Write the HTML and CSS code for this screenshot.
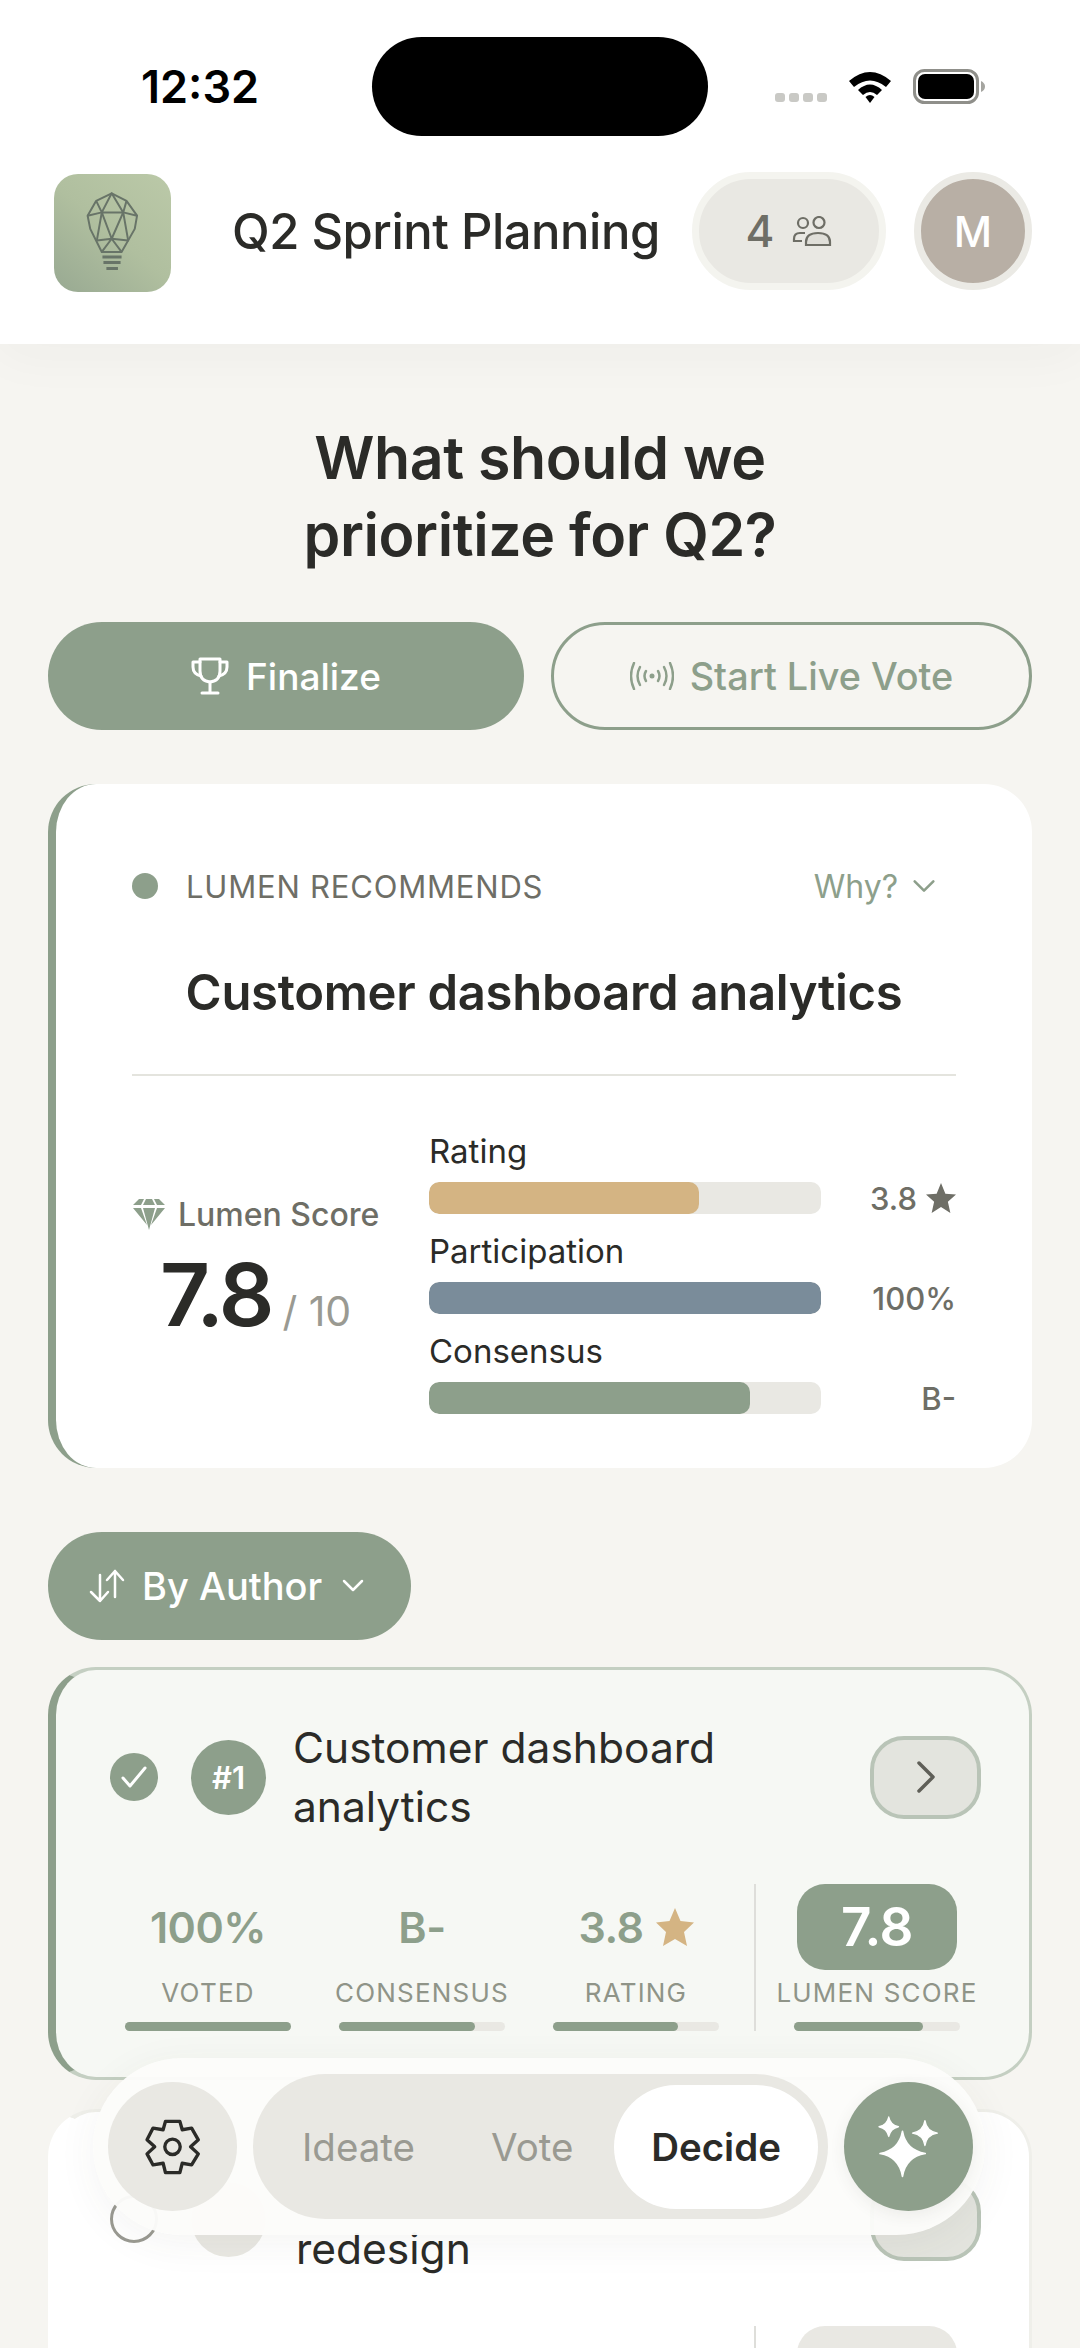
FILE: index.html
```html
<!DOCTYPE html>
<html lang="en">

<head>
    <meta charset="UTF-8">
    <title>Q2 Sprint Planning</title>
    <meta name="viewport" content="width=device-width, initial-scale=1.0">
    <link rel="stylesheet" href="styles.css">
</head>

<body>

    <header class="top">
        <div class="status-bar">
            <span class="time">12:32</span>
            <div class="island"></div>
            <div class="status-icons">
                <div class="signal"><i></i><i></i><i></i><i></i></div>
                <svg class="wifi" viewBox="0 0 44 33">
                    <path d="M1 11 Q22 -7 43 11 L38 17 Q22 4 6 17 Z" fill="#000" />
                    <path d="M10 20 Q22 9 34 20 L29 25 Q22 19 15 25 Z" fill="#000" />
                    <path d="M17.500 27 Q22 23 26.500 27 L22 33 Z" fill="#000" />
                </svg>
                <svg class="battery" viewBox="0 0 73 35">
                    <rect x="1.500" y="1.500" width="63" height="32" rx="10" fill="none" stroke="#8f8f8a" stroke-width="3" />
                    <rect x="5" y="5" width="56" height="25" rx="7" fill="#000" />
                    <path d="M68 12 Q72 14 72 17.500 Q72 21 68 23 Z" fill="#a5a5a0" />
                </svg>
            </div>
        </div>

        <div class="app-bar">
            <div class="logo">
                <svg viewBox="70 70 355 355">
                    <g fill="none" stroke="#687468" stroke-width="6" stroke-linejoin="round">
                        <path d="M245 127 L290 150 L322 195 L315 235 L275 305 H215 L180 235 L172 195 L198 150 Z" />
                        <path d="M215 185 H280 L245 127 Z M215 185 L245 265 L280 185 M198 150 L215 185 L172 195 M290 150 L280 185 L322 195" />
                        <path d="M215 185 L200 270 L245 265 L295 270 L280 185 M245 265 L215 305 M245 265 L275 305" />
                    </g>
                    <path d="M217 320 H275 M220 337 H272 M229 355 H264" stroke="#687468" stroke-width="9" />
                </svg>
            </div>
            <h1 class="app-title">Q2 Sprint Planning</h1>
            <div class="people-pill">
                <span>4</span>
                <svg viewBox="0 0 40 30" fill="none" stroke="#6e6e66" stroke-width="2.200">
                    <circle cx="11" cy="7" r="5" />
                    <circle cx="27" cy="6.500" r="5.500" />
                    <path d="M13 17 H8 Q2 17 2 23 V25 H10" />
                    <path d="M14 29 V26 Q14 17 26 17 Q38 17 38 26 V29 Z" fill="#e0dfd9" />
                </svg>
            </div>
            <div class="avatar">M</div>
        </div>
    </header>

    <main class="content">
        <h2 class="question">What should we<br>prioritize for Q2?</h2>

        <div class="actions">
            <button class="btn btn-finalize">
                <svg viewBox="0 0 38 38" fill="none" stroke="#fff" stroke-width="3" stroke-linejoin="round" stroke-linecap="round">
                    <path d="M9 2 H29 V14 Q29 24 19 25 Q9 24 9 14 Z" />
                    <path d="M9 5 H2 V10 Q2 17 10 19 M29 5 H36 V10 Q36 17 28 19 M19 25 V36 M11 36 H27" />
                </svg>
                Finalize
            </button>
            <button class="btn btn-live">
                <svg viewBox="0 0 44 28" fill="none" stroke="#8d9f8b" stroke-width="2.500" stroke-linecap="round">
                    <circle cx="22" cy="14" r="2.500" fill="#8d9f8b" stroke="none" />
                    <path d="M16 9 Q13 14 16 19 M28 9 Q31 14 28 19" />
                    <path d="M10 5 Q5 14 10 23 M34 5 Q39 14 34 23" />
                    <path d="M4 1 Q-2 14 4 27 M40 1 Q46 14 40 27" />
                </svg>
                Start Live Vote
            </button>
        </div>

        <section class="rec-card">
            <div class="rec-head">
                <span class="rec-dot"></span>
                <span class="rec-label">LUMEN RECOMMENDS</span>
                <span class="rec-why">Why?
                    <svg viewBox="0 0 20 12" fill="none" stroke="#8d9f8b" stroke-width="2.200" stroke-linecap="round" stroke-linejoin="round">
                        <path d="M2 2 L10 10 L18 2" />
                    </svg>
                </span>
            </div>
            <h3 class="rec-title">Customer dashboard analytics</h3>
            <div class="rec-line"></div>

            <div class="rec-body">
                <div class="score">
                    <div class="score-name">
                        <svg viewBox="0 0 34 32">
                            <path d="M7 1 H12 L9 7 H1 Z M14 1 H20 L23 7 H11 Z M22 1 H27 L33 7 H25 Z" fill="#8d9f8b" />
                            <path d="M1 10 H9 L15 27 Z M11 10 H23 L17 32 Z M25 10 H33 L19 27 Z" fill="#8d9f8b" />
                        </svg>
                        Lumen Score
                    </div>
                    <div class="score-num"><strong>7.8</strong><span>/ 10</span></div>
                </div>

                <div class="metrics">
                    <div class="metric-name">Rating</div>
                    <div class="metric-row">
                        <div class="track"><div class="fill fill-tan" style="width: 69%"></div></div>
                        <div class="metric-val">3.8
                            <svg viewBox="0 0 24 24"><path d="M12 0 L15.500 8.500 L24 9.200 L17.500 15 L19.500 24 L12 19.200 L4.500 24 L6.500 15 L0 9.200 L8.500 8.500 Z" fill="#6e6e66" /></svg>
                        </div>
                    </div>
                    <div class="metric-name">Participation</div>
                    <div class="metric-row">
                        <div class="track"><div class="fill fill-blue" style="width: 100%"></div></div>
                        <div class="metric-val">100%</div>
                    </div>
                    <div class="metric-name">Consensus</div>
                    <div class="metric-row">
                        <div class="track"><div class="fill fill-sage" style="width: 82%"></div></div>
                        <div class="metric-val">B-</div>
                    </div>
                </div>
            </div>
        </section>

        <button class="sort-btn">
            <svg class="sort-arrows" viewBox="0 0 36 34" fill="none" stroke="#fff" stroke-width="2.500" stroke-linecap="round" stroke-linejoin="round">
                <path d="M11 6 V32 M2 23 L11 32 L19 23" />
                <path d="M26 28 V2 M18 11 L26 2 L34 11" />
            </svg>
            By Author
            <svg class="sort-chev" viewBox="0 0 22 14" fill="none" stroke="#fff" stroke-width="2.500" stroke-linecap="round" stroke-linejoin="round">
                <path d="M2 2 L11 11 L20 2" />
            </svg>
        </button>

        <article class="item item-top">
            <div class="item-head">
                <span class="check check-on">
                    <svg viewBox="0 0 28 24" fill="none" stroke="#fff" stroke-width="3" stroke-linecap="round" stroke-linejoin="round">
                        <path d="M3 13 L10 21 L25 3" />
                    </svg>
                </span>
                <span class="rank rank-on">#1</span>
                <div class="item-title">Customer dashboard analytics</div>
                <span class="chev-btn">
                    <svg viewBox="0 0 20 34" fill="none" stroke="#5f5f58" stroke-width="3.500" stroke-linecap="round" stroke-linejoin="round">
                        <path d="M3 3 L17 17 L3 31" />
                    </svg>
                </span>
            </div>
            <div class="stats">
                <div class="stat">
                    <div class="stat-val">100%</div>
                    <div class="stat-label">VOTED</div>
                    <div class="mini-track"><div class="mini-fill" style="width: 100%"></div></div>
                </div>
                <div class="stat">
                    <div class="stat-val">B-</div>
                    <div class="stat-label">CONSENSUS</div>
                    <div class="mini-track"><div class="mini-fill" style="width: 82%"></div></div>
                </div>
                <div class="stat">
                    <div class="stat-val">3.8
                        <svg viewBox="0 0 38 38"><path d="M19 0 L24.500 13 L38 14.500 L28 24 L31 38 L19 31 L7 38 L10 24 L0 14.500 L13.500 13 Z" fill="#d4b483" /></svg>
                    </div>
                    <div class="stat-label">RATING</div>
                    <div class="mini-track"><div class="mini-fill" style="width: 75%"></div></div>
                </div>
                <div class="stat-split"></div>
                <div class="stat">
                    <div class="chip">7.8</div>
                    <div class="stat-label">LUMEN SCORE</div>
                    <div class="mini-track"><div class="mini-fill" style="width: 78%"></div></div>
                </div>
            </div>
        </article>

        <!-- first line of this card sits behind the floating bar -->
        <article class="item">
            <div class="item-head">
                <span class="check"></span>
                <span class="rank"></span>
                <div class="item-title item-title-2"><br>redesign</div>
                <span class="chev-btn"></span>
            </div>
            <div class="stats">
                <div class="stat"></div>
                <div class="stat"></div>
                <div class="stat"></div>
                <div class="stat-split"></div>
                <div class="stat">
                    <div class="chip chip-off"></div>
                </div>
            </div>
        </article>
    </main>

    <nav class="float-nav">
        <button class="round-btn round-gear">
            <svg viewBox="130 172 176 176" fill="none" stroke="#2b2b28" stroke-width="10" stroke-linejoin="round">
                <path d="M197 185 H240 L247 210 L275 205 L295 240 L272 261 L295 282 L275 315 L247 310 L240 338 H197 L190 310 L160 315 L142 282 L165 261 L142 240 L160 205 L190 210 Z" />
                <circle cx="218" cy="261" r="23" />
            </svg>
        </button>
        <div class="segments">
            <span class="seg">Ideate</span>
            <span class="seg">Vote</span>
            <span class="seg seg-on">Decide</span>
        </div>
        <button class="round-btn round-spark">
            <svg viewBox="165 221 200 200" fill="#fff">
                <path d="M247 276 Q257 332 315 342 Q257 352 247 410 Q237 352 180 342 Q237 332 247 276 Z" stroke="#fff" stroke-width="5" stroke-linejoin="round" />
                <path d="M206 233 Q211 257 235 262 Q211 267 206 291 Q201 267 177 262 Q201 257 206 233 Z" stroke="#fff" stroke-width="4" stroke-linejoin="round" />
                <path d="M314 244 Q319 276 351 281 Q319 286 314 318 Q309 286 277 281 Q309 276 314 244 Z" stroke="#fff" stroke-width="4" stroke-linejoin="round" />
            </svg>
        </button>
    </nav>

</body>

</html>
```

FILE: styles.css
```css
* {
    box-sizing: border-box;
}

html,
body {
    height: 2348px;
}

body {
    font-family: Inter, "Noto Sans", sans-serif;
    background-color: #f6f5f1;
    color: #2b2b28;
    margin: 0;
    overflow: hidden;
    position: relative;
}

button {
    font-family: inherit;
    border: none;
    padding: 0;
}

svg {
    display: block;
}

/* Top area */
.top {
    position: relative;
    background-color: #fff;
    height: 344px;
    padding-top: 37px;
    box-shadow: 0 10px 50px rgba(60, 60, 50, 0.04);
}

.status-bar {
    display: grid;
    grid-template-columns: 1fr 336px 1fr;
    align-items: center;
    height: 99px;
}

.time {
    padding-left: 141px;
    font-size: 45px;
    font-weight: 600;
    color: #000;
}

.island {
    height: 99px;
    background-color: #000;
    border-radius: 50px;
}

.status-icons {
    display: flex;
    align-items: center;
    margin-left: 67px;
}

.signal {
    display: flex;
    gap: 4px;
    margin-top: 22px;
}

.signal i {
    display: block;
    width: 10px;
    height: 9px;
    border-radius: 3px;
    background-color: #c9c9c5;
}

.wifi {
    width: 44px;
    height: 33px;
    margin-left: 21px;
}

.battery {
    width: 73px;
    height: 35px;
    margin-left: 21px;
}

.app-bar {
    display: flex;
    align-items: center;
    height: 118px;
    margin-top: 36px;
    padding: 0 48px 0 54px;
}

.logo {
    align-self: flex-start;
    width: 117px;
    height: 118px;
    margin-top: 2px;
    border-radius: 24px;
    background: linear-gradient(40deg, #98a992 0%, #b0bf9f 50%, #bbc9a8 100%);
}

.logo svg {
    width: 100%;
    height: 100%;
}

.app-title {
    flex: 1;
    margin: 0 0 0 61px;
    font-size: 49px;
    font-weight: 500;
    letter-spacing: -0.5px;
    white-space: nowrap;
}

.people-pill {
    display: flex;
    align-items: center;
    justify-content: center;
    gap: 18px;
    width: 194px;
    height: 118px;
    border-radius: 59px;
    background-color: #e9e8e3;
    border: 7px solid #f4f4ef;
    color: #6e6e66;
    font-size: 44px;
    font-weight: 500;
}

.people-pill svg {
    width: 40px;
    height: 30px;
}

.avatar {
    display: flex;
    align-items: center;
    justify-content: center;
    width: 118px;
    height: 118px;
    margin-left: 28px;
    border-radius: 50%;
    background-color: #b8afa5;
    border: 7px solid #ebeae5;
    color: #fff;
    font-size: 42px;
    font-weight: 500;
}

/* Page content */
.content {
    padding: 75px 48px 0;
}

.question {
    margin: 0;
    text-align: center;
    font-size: 59px;
    line-height: 77px;
    font-weight: 600;
    letter-spacing: -0.4px;
}

.actions {
    display: flex;
    gap: 27px;
    margin-top: 49px;
}

.btn {
    display: flex;
    align-items: center;
    justify-content: center;
    flex: none;
    height: 108px;
    border-radius: 54px;
    font-size: 37px;
    font-weight: 500;
}

.btn-finalize {
    width: 476px;
    gap: 17px;
    background-color: #8d9f8b;
    color: #fff;
}

.btn-finalize svg {
    width: 38px;
    height: 38px;
}

.btn-live {
    width: 481px;
    gap: 16px;
    font-size: 37.800px;
    background-color: transparent;
    border: 3px solid #8d9f8b;
    color: #8d9f8b;
}

.btn-live svg {
    width: 44px;
    height: 28px;
}

/* Recommendation card */
.rec-card {
    margin-top: 54px;
    height: 684px;
    padding: 84px 76px 0;
    background-color: #fff;
    border-left: 8px solid #8d9f8b;
    border-radius: 48px;
}

.rec-head {
    display: flex;
    align-items: center;
    height: 36px;
}

.rec-dot {
    width: 26px;
    height: 26px;
    border-radius: 50%;
    background-color: #8d9f8b;
}

.rec-label {
    flex: 1;
    margin-left: 28px;
    font-size: 31px;
    letter-spacing: 0.8px;
    color: #6e6e66;
}

.rec-why {
    display: flex;
    align-items: center;
    gap: 14px;
    margin-right: 20px;
    font-size: 32px;
    color: #8d9f8b;
}

.rec-why svg {
    width: 24px;
    height: 14px;
}

.rec-title {
    margin: 57px 0 0;
    text-align: center;
    font-size: 49px;
    line-height: 64px;
    font-weight: 600;
    letter-spacing: -0.3px;
}

.rec-line {
    height: 2px;
    margin-top: 49px;
    background-color: #e4e4de;
}

.rec-body {
    display: flex;
    margin-top: 55px;
}

.score {
    width: 297px;
    padding-top: 64px;
}

.score-name {
    display: flex;
    align-items: center;
    gap: 12px;
    height: 38px;
    font-size: 32px;
    font-weight: 500;
    color: #6e6e66;
    white-space: nowrap;
}

.score-name svg {
    width: 34px;
    height: 32px;
}

.score-num {
    display: flex;
    align-items: baseline;
    gap: 11px;
    margin: 16px 0 0 28px;
}

.score-num strong {
    font-size: 87px;
    line-height: 92px;
    font-weight: 600;
    letter-spacing: -3px;
}

.score-num span {
    font-size: 41px;
    color: #9a9a92;
}

.metrics {
    flex: 1;
}

.metric-name {
    height: 40px;
    line-height: 40px;
    font-size: 33px;
}

.metric-row {
    display: flex;
    align-items: center;
    height: 32px;
    margin: 11px 0 17px;
}

.track {
    width: 392px;
    height: 32px;
    border-radius: 10px;
    background-color: #e9e8e3;
    overflow: hidden;
}

.fill {
    height: 100%;
    border-radius: 10px;
}

.fill-tan {
    background-color: #d4b483;
}

.fill-blue {
    background-color: #7a8c9a;
}

.fill-sage {
    background-color: #8d9f8b;
}

.metric-val {
    display: flex;
    align-items: center;
    justify-content: flex-end;
    gap: 9px;
    flex: 1;
    font-size: 31px;
    font-weight: 500;
    color: #6e6e66;
}

.metric-val svg {
    width: 30px;
    height: 30px;
}

/* Sort */
.sort-btn {
    display: flex;
    align-items: center;
    margin-top: 64px;
    width: 363px;
    height: 108px;
    padding-left: 41px;
    border-radius: 54px;
    background-color: #8d9f8b;
    color: #fff;
    font-size: 38px;
    font-weight: 500;
}

.sort-arrows {
    width: 36px;
    height: 34px;
    margin-right: 17px;
}

.sort-chev {
    width: 22px;
    height: 14px;
    margin-left: 20px;
}

/* Item cards */
.item {
    height: 413px;
    margin-top: 29px;
    padding: 48px 48px 0 54px;
    background-color: #fff;
    border: 3px solid #efefea;
    border-left: 8px solid #fff;
    border-radius: 48px;
}

.item-top {
    margin-top: 27px;
    background-color: #f6f8f4;
    border: 3px solid #c4cfc2;
    border-left: 8px solid #8d9f8b;
}

.item-head {
    display: flex;
    align-items: center;
    height: 118px;
}

.check {
    display: flex;
    align-items: center;
    justify-content: center;
    flex: none;
    width: 48px;
    height: 48px;
    border-radius: 50%;
    border: 3px solid #9a9a92;
}

.check-on {
    border: none;
    background-color: #8d9f8b;
}

.check svg {
    width: 28px;
    height: 24px;
}

.rank {
    display: flex;
    align-items: center;
    justify-content: center;
    flex: none;
    width: 75px;
    height: 75px;
    margin-left: 33px;
    border-radius: 50%;
    background-color: #e9e8e3;
    font-size: 31px;
    font-weight: 600;
}

.rank-on {
    background-color: #8d9f8b;
    color: #fff;
}

.item-title {
    flex: 1;
    margin: 0 40px 0 27px;
    padding-right: 100px;
    font-size: 42.500px;
    line-height: 59px;
}

.item-title-2 {
    margin-left: 30px;
}

.chev-btn {
    display: flex;
    align-items: center;
    justify-content: center;
    flex: none;
    width: 111px;
    height: 83px;
    border-radius: 34px;
    background-color: #e3e4de;
    border: 4px solid #b9c4b7;
}

.chev-btn svg {
    width: 20px;
    height: 34px;
}

.stats {
    display: flex;
    margin: 48px 0 0 15px;
}

.stat {
    display: flex;
    flex-direction: column;
    align-items: center;
    flex: none;
    width: 166px;
    margin-right: 48px;
}

.stat-val {
    display: flex;
    align-items: center;
    gap: 12px;
    height: 86px;
    font-size: 43px;
    font-weight: 600;
    letter-spacing: -0.5px;
    color: #8d9f8b;
}

.stat-val svg {
    width: 38px;
    height: 38px;
}

.stat-label {
    margin-top: 6px;
    height: 34px;
    line-height: 34px;
    font-size: 26px;
    letter-spacing: 1.2px;
    color: #8f9488;
    white-space: nowrap;
}

.stat-split {
    flex: none;
    width: 2px;
    height: 147px;
    margin: 0 38px 0 -13px;
    background-color: #dededa;
}

.chip {
    display: flex;
    align-items: center;
    justify-content: center;
    flex: none;
    width: 160px;
    height: 86px;
    border-radius: 28px;
    background-color: #8d9f8b;
    color: #fff;
    font-size: 53px;
    font-weight: 600;
    letter-spacing: -0.5px;
}

.chip-off {
    background-color: #e9e8e3;
}

.mini-track {
    width: 166px;
    height: 9px;
    margin-top: 12px;
    border-radius: 5px;
    background-color: #e9e8e3;
}

.mini-fill {
    height: 100%;
    border-radius: 5px;
    background-color: #8d9f8b;
}

/* Floating bar */
.float-nav {
    position: absolute;
    left: 93px;
    top: 2058px;
    display: flex;
    align-items: center;
    width: 892px;
    height: 177px;
    padding: 0 13px 0 15px;
    border-radius: 89px;
    background-color: rgba(252, 252, 250, 0.96);
    box-shadow: 0 8px 40px rgba(60, 60, 50, 0.06);
}

.round-btn {
    display: flex;
    align-items: center;
    justify-content: center;
    flex: none;
    width: 129px;
    height: 129px;
    border-radius: 50%;
}

.round-gear {
    background-color: #e9e8e3;
}

.round-gear svg {
    width: 59px;
    height: 59px;
}

.round-spark {
    margin-left: 16px;
    background-color: #8d9f8b;
    box-shadow: 0 4px 16px rgba(60, 60, 50, 0.08);
}

.round-spark svg {
    width: 67px;
    height: 67px;
}

.segments {
    display: flex;
    align-items: center;
    gap: 2px;
    flex: none;
    width: 575px;
    height: 145px;
    margin-left: 16px;
    padding: 0 10px 0 12px;
    border-radius: 73px;
    background-color: #e9e8e3;
}

.seg {
    display: flex;
    align-items: center;
    justify-content: center;
    height: 124px;
    padding: 0 37px;
    border-radius: 62px;
    font-size: 38.500px;
    color: #9a9a92;
}

.seg-on {
    margin-left: auto;
    background-color: #fff;
    color: #2b2b28;
    font-weight: 600;
}
```
